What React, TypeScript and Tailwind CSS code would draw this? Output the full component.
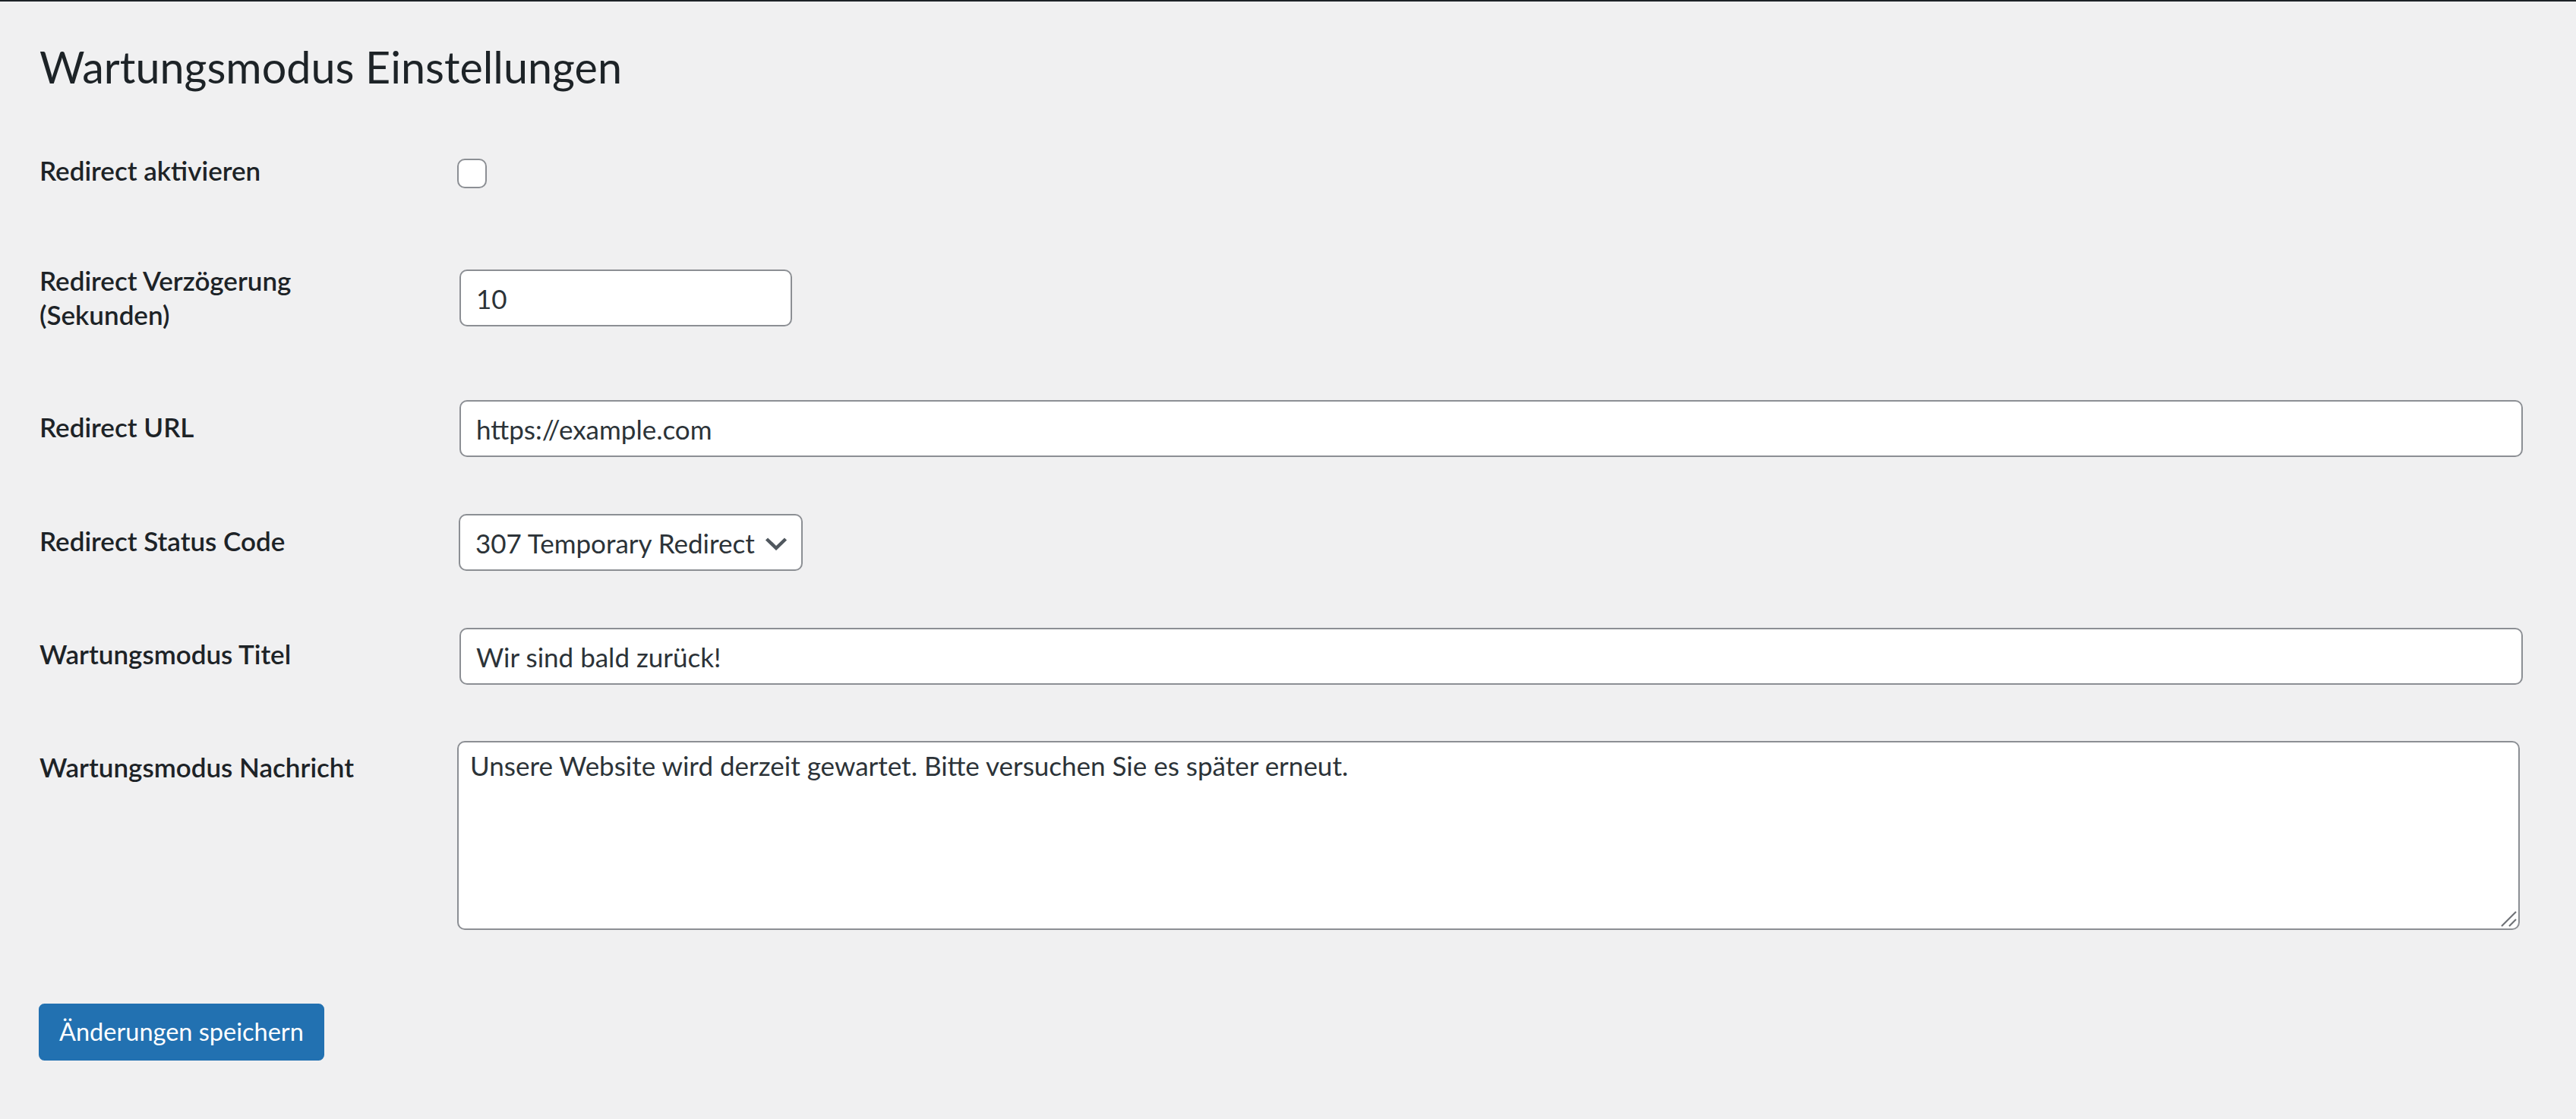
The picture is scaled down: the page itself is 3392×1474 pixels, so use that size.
import type { ReactNode } from 'react';

interface RowProps {
  label: ReactNode;
  rowClass: string;
  labelClass: string;
  children: ReactNode;
}

// one line of the settings table: label on the left, field on the right
function Row({ label, rowClass, labelClass, children }: RowProps) {
  return (
    <div className={`flex items-start ${rowClass}`}>
      <div className={`w-[550px] shrink-0 text-[35px] leading-[45.5px] font-semibold text-[#1d2327] ${labelClass}`}>
        {label}
      </div>
      <div className="flex-1 min-w-0 pt-[37.5px]">{children}</div>
    </div>
  );
}

const inputClass =
  'h-[75px] bg-white border-[2.5px] border-[#8c8f94] rounded-[10px] px-5 text-[35px] text-[#2c3338] outline-none font-[Lato,sans-serif]';

export default function App() {
  return (
    <div className="min-h-screen bg-[#f0f0f1] font-[Lato,sans-serif] text-[#1d2327]">
      <div className="h-[2px] bg-[#1d2327]" />

      <div className="pl-[52px] pr-[70px] pb-10">
        <h1 className="pt-[49px] text-[57.5px] leading-[74.75px] font-normal">Wartungsmodus Einstellungen</h1>

        <div className="mt-[46px] flex flex-col">
          <Row label="Redirect aktivieren" rowClass="h-[146px]" labelClass="pt-[30px]">
            <input
              type="checkbox"
              className="block appearance-none w-[39px] h-[39px] -mt-[0.5px] bg-white border-[2.5px] border-[#8c8f94] rounded-[10px]"
            />
          </Row>

          <Row
            label={
              <>
                Redirect Verzögerung
                <br />
                (Sekunden)
              </>
            }
            rowClass="h-[172px]"
            labelClass="pt-[29px]"
          >
            <input type="text" readOnly defaultValue="10" className={`${inputClass} ml-[3px] w-[438px]`} />
          </Row>

          <Row label="Redirect URL" rowClass="h-[150px]" labelClass="pt-[50px]">
            <input type="text" readOnly defaultValue="https://example.com" className={`${inputClass} ml-[3px] w-[calc(100%-3px)]`} />
          </Row>

          <Row label="Redirect Status Code" rowClass="h-[150px]" labelClass="pt-[50px]">
            <div className="ml-[2px] w-[453px] h-[75px] flex items-center justify-between bg-white border-[2.5px] border-[#8c8f94] rounded-[10px] pl-5 pr-[18px] text-[35px] text-[#2c3338]">
              <span>307 Temporary Redirect</span>
              <svg width="30" height="18" viewBox="0 0 30 18" fill="none" className="mt-[2px]">
                <polyline points="2.5,3 15,15 27.5,3" stroke="#50575e" strokeWidth="4.5" />
              </svg>
            </div>
          </Row>

          <Row label="Wartungsmodus Titel" rowClass="h-[149px]" labelClass="pt-[49px]">
            <input type="text" readOnly defaultValue="Wir sind bald zurück!" className={`${inputClass} ml-[3px] w-[calc(100%-3px)]`} />
          </Row>

          <Row label="Wartungsmodus Nachricht" rowClass="pb-[37.5px]" labelClass="pt-[49px]">
            <div className="relative w-[calc(100%-4px)]">
              <textarea
                readOnly
                defaultValue="Unsere Website wird derzeit gewartet. Bitte versuchen Sie es später erneut."
                className="block w-full h-[249px] resize-none bg-white border-[2.5px] border-[#8c8f94] rounded-[10px] px-[15px] py-[5px] text-[35px] leading-[50px] text-[#2c3338] outline-none font-[Lato,sans-serif]"
              />
              {/* resize grip */}
              <svg width="22" height="22" viewBox="0 0 22 22" className="absolute right-[3px] bottom-[3px]">
                <line x1="1" y1="20" x2="20" y2="1" stroke="#6e7176" strokeWidth="2.2" />
                <line x1="11" y1="20" x2="20" y2="11" stroke="#6e7176" strokeWidth="2.2" />
              </svg>
            </div>
          </Row>
        </div>

        <button
          type="button"
          className="mt-[59px] -ml-px h-[75px] px-[25px] bg-[#2271b1] border-[2.5px] border-[#2271b1] rounded-[7.5px] text-white text-[32.5px] leading-[70px]"
        >
          Änderungen speichern
        </button>
      </div>
    </div>
  );
}
